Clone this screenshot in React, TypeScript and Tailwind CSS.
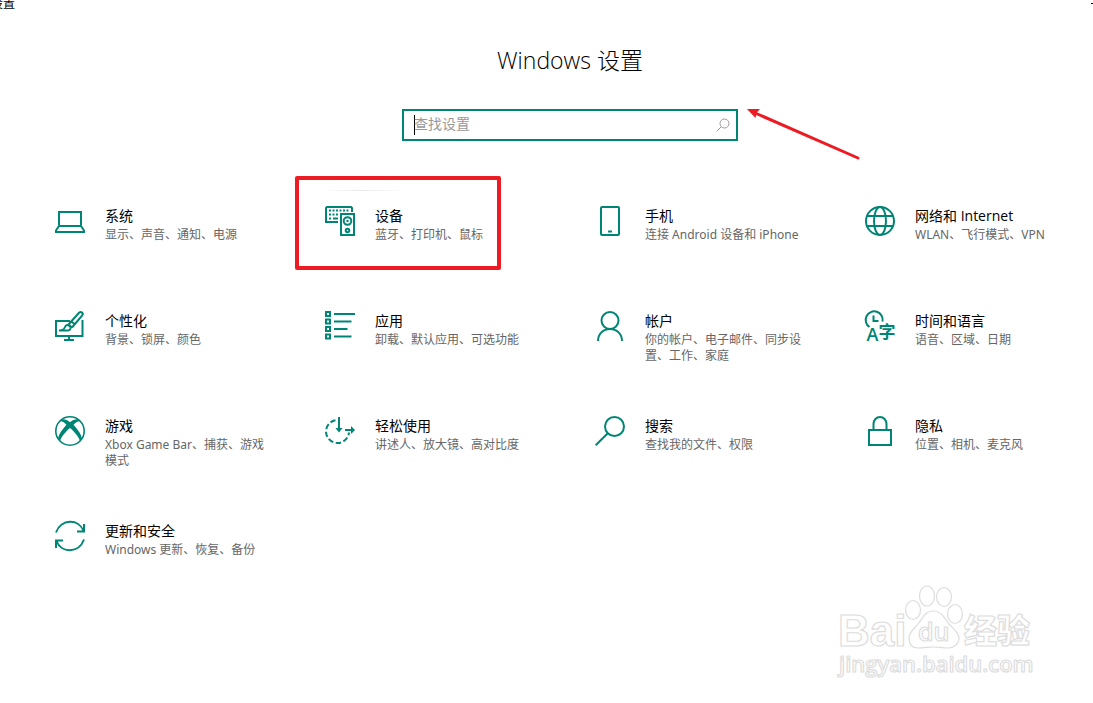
import React, { useState } from 'react';

interface Category {
  title: string;
  description: string;
  icon: React.ReactNode;
  highlighted?: boolean;
}

const Icon: React.FC<{ children: React.ReactNode }> = ({ children }) => (
  <svg
    width="30"
    height="30"
    viewBox="0 0 30 30"
    fill="none"
    stroke="currentColor"
    strokeWidth="2"
    className="shrink-0 overflow-visible text-[#008575]"
    aria-hidden="true"
  >
    {children}
  </svg>
);

const categories: Category[] = [
  {
    title: '系统',
    description: '显示、声音、通知、电源',
    icon: (
      <Icon>
        <path d="M4 19V6h22v13M4 20h22l3 4.500V26H1v-1.500z" />
      </Icon>
    ),
  },
  {
    title: '设备',
    description: '蓝牙、打印机、鼠标',
    highlighted: true,
    icon: (
      <Icon>
        <path d="M13 16H1V2l1-1h24l1 1v4" />
        <path d="M4 4.500h20M4 8.500h9" strokeDasharray="2 1.500" />
        <path d="M4 12.500h2M8 12.500h5" />
        <path d="M16 8h13v21H16z" />
        <circle cx="22.500" cy="15" r="3.800" />
        <circle cx="22.500" cy="15" r="1.200" fill="currentColor" stroke="none" />
        <circle cx="22.500" cy="24.500" r="1.800" />
      </Icon>
    ),
  },
  {
    title: '手机',
    description: '连接 Android 设备和 iPhone',
    icon: (
      <Icon>
        <rect x="6" y="1" width="18" height="28" rx="1" />
        <path d="M13 25.500h4" />
      </Icon>
    ),
  },
  {
    title: '网络和 Internet',
    description: 'WLAN、飞行模式、VPN',
    icon: (
      <Icon>
        <circle cx="15" cy="15" r="14" />
        <ellipse cx="15" cy="15" rx="6" ry="14" />
        <path d="M2 10h26M2 20h26" />
      </Icon>
    ),
  },
  {
    title: '个性化',
    description: '背景、锁屏、颜色',
    icon: (
      <Icon>
        <path d="M15 10H1v15h26.500V9M14 25v4M9 29h10" />
        <path d="M13.500 13.500L24 1.800c2.200-1.800 4.800.4 3.200 2.700L17 16.500M13.500 13.500l3.500 3M16.500 10.500l3.500 3" />
        <path d="M4 19.500c4 0 5-1 6-3.500s3-2.500 4.800-.8c1.600 1.800.7 4-1.800 4.300z" />
      </Icon>
    ),
  },
  {
    title: '应用',
    description: '卸载、默认应用、可选功能',
    icon: (
      <Icon>
        <path d="M1 1h4v4H1zM1 8.500h4v4H1zM1 16h4v4H1zM1 23.500h4v4H1z" />
        <path d="M9 3h21M9 10.500h17.500M9 18h13.500M9 25.500h17.500" />
      </Icon>
    ),
  },
  {
    title: '帐户',
    description: '你的帐户、电子邮件、同步设置、工作、家庭',
    icon: (
      <Icon>
        <circle cx="15" cy="9.500" r="8.500" />
        <path d="M3 30c0-7 5-12 12-12s12 5 12 12" />
      </Icon>
    ),
  },
  {
    title: '时间和语言',
    description: '语音、区域、日期',
    icon: (
      <Icon>
        <path d="M4.500 16A8.500 8.500 0 1 1 17.500 10.500M8.500 4.500V10h5" />
        <text x="1.500" y="30" fontSize="18" fontWeight="600" fill="currentColor" stroke="none" className="font-['Open_Sans','Noto_Sans_CJK_SC',sans-serif]">A</text>
        <text x="13.500" y="27" fontSize="17" fontWeight="700" fill="currentColor" stroke="none" className="font-['Noto_Sans_CJK_SC',sans-serif]">字</text>
      </Icon>
    ),
  },
  {
    title: '游戏',
    description: 'Xbox Game Bar、捕获、游戏模式',
    icon: (
      <Icon>
        <circle cx="15" cy="15" r="14.200" strokeWidth="1.600" />
        <path
          d="M6 3.500c3.500-.8 6.500.8 9 2.700 2.500-1.900 5.500-3.500 9-2.700l1.500 1.800c-2.500-.6-5 1.200-7 3.400 3.500 3.800 8 9.300 8.500 14.300l-2 2.200c-1.500-5-6-9.700-10-13.200-4 3.500-8.500 8.200-10 13.200l-2-2.200c.5-5 5-10.500 8.500-14.300-2-2.200-4.500-4-7-3.400z"
          fill="currentColor"
          stroke="none"
        />
      </Icon>
    ),
  },
  {
    title: '轻松使用',
    description: '讲述人、放大镜、高对比度',
    icon: (
      <Icon>
        <path d="M10.500 4.200A11.500 11.500 0 1 0 24 16.500" strokeDasharray="5.500 2.500" />
        <path d="M14 1v13M20 14h7" />
        <path d="M10.500 12L14 16.500l3.500-4.500zM26 10l4 4-4 4z" fill="currentColor" stroke="none" />
      </Icon>
    ),
  },
  {
    title: '搜索',
    description: '查找我的文件、权限',
    icon: (
      <Icon>
        <circle cx="19.500" cy="10.500" r="9.500" />
        <path d="M12.800 17.200L.7 29.300" />
      </Icon>
    ),
  },
  {
    title: '隐私',
    description: '位置、相机、麦克风',
    icon: (
      <Icon>
        <path d="M4 14h22v15H4zM8.500 14V8a6.500 7 0 0 1 13 0v6" />
      </Icon>
    ),
  },
  {
    title: '更新和安全',
    description: 'Windows 更新、恢复、备份',
    icon: (
      <Icon>
        <path d="M1 11.500C6-2.500 24-2.500 28.500 10M29 3v7.500h-7M29 18.500C24 32.500 6 32.500 1.500 20M1 27v-7.500h7" />
      </Icon>
    ),
  },
];

const CategoryLink: React.FC<{ category: Category }> = ({ category }) => (
  <a href="#" className="relative flex items-start gap-5 pr-3">
    {category.highlighted && (
      <span className="pointer-events-none absolute -top-[30px] -left-[30px] h-[94px] w-[206px] rounded-xs border-4 border-[#ed1c24]">
        <span className="mt-2.5 ml-6 block h-px w-20 bg-linear-to-r from-white via-gray-200 to-white" />
      </span>
    )}
    {category.icon}
    <span className="min-w-0">
      <span className="block text-[14px] leading-5 text-black">{category.title}</span>
      <span className="mt-px block font-['Noto_Sans','Noto_Sans_CJK_SC',sans-serif] text-[12px] leading-4 text-[#666666]">
        {category.description}
      </span>
    </span>
  </a>
);

const SearchBox: React.FC = () => {
  const [query, setQuery] = useState('');

  return (
    <form role="search" className="relative mx-auto mt-[33px] w-[336px]" onSubmit={(e) => e.preventDefault()}>
      <div className="flex h-8 items-center border-2 border-[#008575] pr-1.5 pl-2.5">
        {!query && <span className="-mr-px h-5 w-px shrink-0 bg-black" />}
        <input
          type="text"
          aria-label="查找设置"
          placeholder="查找设置"
          value={query}
          onChange={(e) => setQuery(e.target.value)}
          className="min-w-0 flex-1 bg-transparent pb-0.5 text-[14px] leading-5 text-black outline-none placeholder:text-[#999999]"
        />
        <button type="submit" aria-label="搜索" className="text-[#999999]">
          <svg width="14" height="14" viewBox="0 0 14 14" fill="none" stroke="currentColor">
            <circle cx="8.500" cy="5.500" r="4.500" />
            <path d="M5.300 8.700L.8 13.200" />
          </svg>
        </button>
      </div>
      <svg width="114" height="52" viewBox="0 0 114 52" className="pointer-events-none absolute top-0 left-full ml-2" aria-hidden="true">
        <path d="M8 3.500L112 49" stroke="#ed1c24" strokeWidth="3" strokeLinecap="round" />
        <path d="M1 0h13l-3.500 4-1 5z" fill="#ed1c24" />
      </svg>
    </form>
  );
};

const Watermark: React.FC = () => (
  <svg
    width="205"
    height="105"
    viewBox="0 0 205 105"
    fill="#ffffff"
    stroke="#dddddd"
    strokeWidth="1.200"
    className="pointer-events-none absolute right-[53px] bottom-[18px] font-['Open_Sans','Noto_Sans_CJK_SC',sans-serif]"
    aria-hidden="true"
  >
    <text x="3" y="66" fontSize="44" fontWeight="700" className="font-['Liberation_Sans',sans-serif]">Bai</text>
    <ellipse cx="78" cy="30" rx="7.500" ry="9.500" />
    <ellipse cx="92" cy="16" rx="7.500" ry="10" />
    <ellipse cx="109" cy="17" rx="7.500" ry="9.500" />
    <ellipse cx="120" cy="34" rx="7.500" ry="9.500" />
    <path d="M98 31c9 0 11 7 16 13 5 5 10 9 10 14 0 6-5 10-11 10-6 0-10-1-15-1s-9 1-15 1c-6 0-9-4-9-10s5-9 9-14c5-6 7-13 15-13z" />
    <text x="83" y="61" fontSize="25" fontWeight="600">du</text>
    <text x="129" y="63" fontSize="33" fontWeight="900" className="font-['Noto_Sans_CJK_SC',sans-serif]">经验</text>
    <text x="4" y="92" fontSize="22" fontWeight="600">jingyan.baidu.com</text>
  </svg>
);

const App: React.FC = () => {
  return (
    <div className="relative min-h-screen overflow-x-hidden bg-white font-['Open_Sans','Noto_Sans_CJK_SC',sans-serif] text-black">
      <header className="flex h-2.5 items-start justify-between overflow-hidden">
        <span className="-ml-[9px] text-[12px] leading-[8px]">设置</span>
        <button type="button" aria-label="最小化" className="flex h-1 w-0.5 items-end">
          <span className="h-px w-full bg-black" />
        </button>
      </header>

      <main className="pt-[34px] pl-[47px]">
        <h1 className="text-center text-[23px] leading-8 font-light">Windows 设置</h1>
        <SearchBox />
        <nav className="mt-[65px] grid auto-rows-[105px] grid-cols-4 gap-x-[42px] pl-2">
          {categories.map((category) => (
            <CategoryLink key={category.title} category={category} />
          ))}
        </nav>
      </main>

      <Watermark />
    </div>
  );
};

export default App;
